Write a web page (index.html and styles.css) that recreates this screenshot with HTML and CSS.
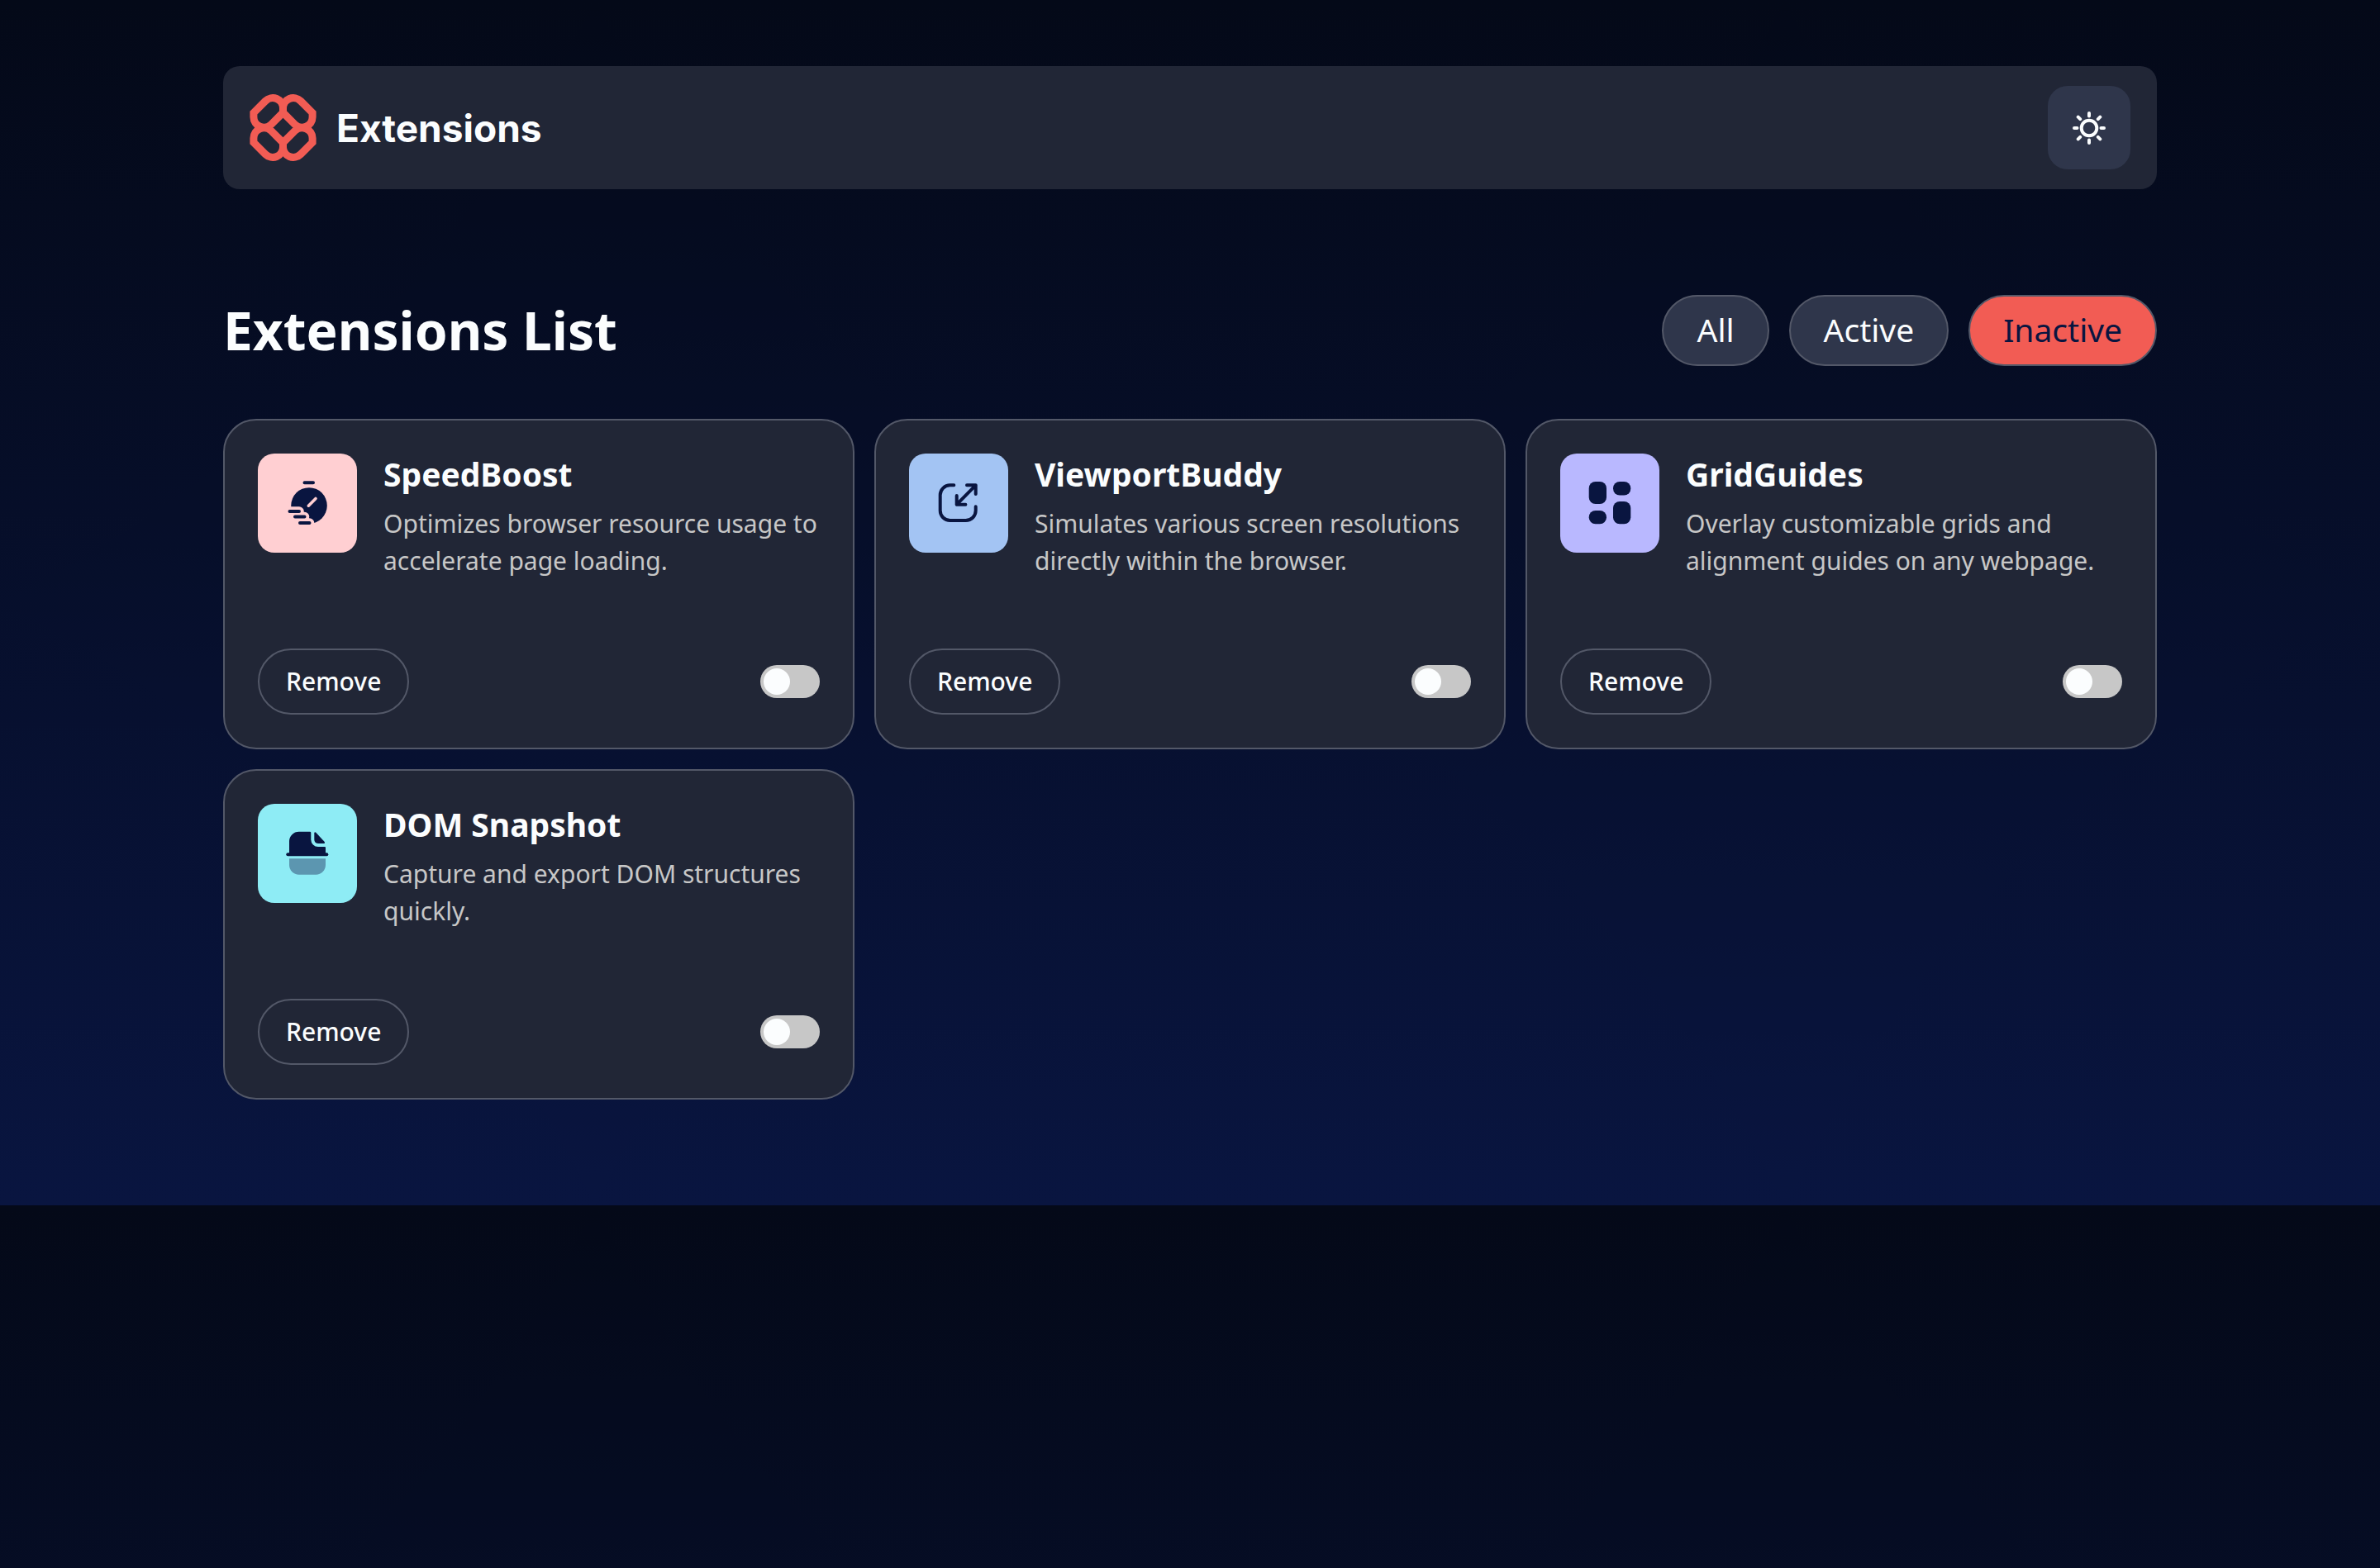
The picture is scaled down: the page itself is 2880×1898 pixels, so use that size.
FILE: index.html
```html
<!DOCTYPE html>
<html lang="en">
<head>
<meta charset="utf-8">
<meta name="viewport" content="width=device-width, initial-scale=1">
<title>Extensions</title>
<link rel="stylesheet" href="styles.css">
</head>
<body>
<div class="container">
  <header class="topbar">
    <a class="brand" href="#">
      <svg class="brand-mark" viewBox="0 0 81 81" aria-hidden="true">
        <defs>
          <path id="link" d="M40.5 17V22.3L26.2 36.6A12.5 12.5 0 0 1 4.9 27.8V22.5L19.2 8.2A12.5 12.5 0 0 1 40.5 17Z"/>
        </defs>
        <g fill="none" stroke="currentColor" stroke-width="9">
          <use href="#link"/>
          <use href="#link" transform="matrix(-1 0 0 1 81 0)"/>
          <use href="#link" transform="matrix(1 0 0 -1 0 81)"/>
          <use href="#link" transform="matrix(-1 0 0 -1 81 81)"/>
        </g>
      </svg>
      <span class="brand-name">Extensions</span>
    </a>
    <button class="theme-button" type="button" aria-label="Switch theme">
      <svg class="theme-icon" viewBox="-22 -22 44 44" aria-hidden="true">
        <g fill="none" stroke="currentColor" stroke-width="4" stroke-linecap="round">
          <circle r="9.3"/>
          <path d="M0-18v3.500M0 14.500V18M-18 0h3.500M14.500 0H18M-13.300-13.300l2.500 2.500M13.300-13.300l-2.500 2.500M-13.300 13.300l2.500-2.500M13.300 13.300l-2.500-2.500"/>
        </g>
      </svg>
    </button>
  </header>

  <main>
    <div class="list-head">
      <h1 class="list-title">Extensions List</h1>
      <div class="filters">
        <button class="filter" type="button">All</button>
        <button class="filter" type="button">Active</button>
        <button class="filter filter-current" type="button" aria-pressed="true">Inactive</button>
      </div>
    </div>

    <div class="cards">
      <article class="card">
        <div class="card-info">
          <svg class="tile tile-pink" viewBox="0 0 120 120" aria-hidden="true">
            <circle cx="62" cy="63" r="21.8" fill="#091540"/>
            <path d="M70 54.500l-8.700 8.700" stroke="#ffcfd2" stroke-width="3.600" stroke-linecap="round"/>
            <path d="M38.500 70H50M45 76.500h11.500M51 84h11.500" stroke="#ffcfd2" stroke-width="11.600" stroke-linecap="round"/>
            <path d="M56.500 35.200H67M38.500 70H50M45 76.500h11.500M51 84h11.500" stroke="#091540" stroke-width="4" stroke-linecap="round"/>
          </svg>
          <div class="card-text">
            <h2 class="card-title">SpeedBoost</h2>
            <p class="card-desc">Optimizes browser resource usage to accelerate page loading.</p>
          </div>
        </div>
        <div class="card-actions">
          <button class="remove" type="button">Remove</button>
          <input class="switch" type="checkbox" role="switch" aria-label="Enable SpeedBoost">
        </div>
      </article>

      <article class="card">
        <div class="card-info">
          <svg class="tile tile-blue" viewBox="0 0 120 120" aria-hidden="true">
            <path d="M54.300 38.300H49.700a12 12 0 0 0-12 12V69a12 12 0 0 0 12 12h19a12 12 0 0 0 12-12v-4.700M70 38.300h10.700V49M80.700 38.300l-23 23.400M57.700 51v10.700h10.700" fill="none" stroke="#091540" stroke-width="4" stroke-linecap="round" stroke-linejoin="round"/>
          </svg>
          <div class="card-text">
            <h2 class="card-title">ViewportBuddy</h2>
            <p class="card-desc">Simulates various screen resolutions directly within the browser.</p>
          </div>
        </div>
        <div class="card-actions">
          <button class="remove" type="button">Remove</button>
          <input class="switch" type="checkbox" role="switch" aria-label="Enable ViewportBuddy">
        </div>
      </article>

      <article class="card">
        <div class="card-info">
          <svg class="tile tile-violet" viewBox="0 0 120 120" aria-hidden="true">
            <g fill="#091540">
              <rect x="34.700" y="34" width="21.300" height="27" rx="8"/>
              <rect x="64" y="34" width="21.300" height="16.600" rx="8"/>
              <rect x="34.700" y="69" width="21.300" height="16.300" rx="8"/>
              <rect x="64" y="58" width="21.300" height="27.300" rx="8"/>
            </g>
          </svg>
          <div class="card-text">
            <h2 class="card-title">GridGuides</h2>
            <p class="card-desc">Overlay customizable grids and alignment guides on any webpage.</p>
          </div>
        </div>
        <div class="card-actions">
          <button class="remove" type="button">Remove</button>
          <input class="switch" type="checkbox" role="switch" aria-label="Enable GridGuides">
        </div>
      </article>

      <article class="card">
        <div class="card-info">
          <svg class="tile tile-cyan" viewBox="0 0 120 120" aria-hidden="true">
            <path d="M38 66.300h44V74a11.700 11.700 0 0 1-11.700 11.700H49.700A11.700 11.700 0 0 1 38 74Z" fill="#5c96b0"/>
            <g fill="#091540">
              <rect x="34.300" y="59.300" width="51" height="4" rx="2"/>
              <path d="M38 60V45.400a11.700 11.700 0 0 1 11.700-11.700H63q1.300 0 1.300 1.300v8.300A8.700 8.700 0 0 0 73 52h8q1 0 1 1v7Z"/>
              <path d="M68.300 35.500q.5-2 2-.7L80.500 45.800q1.300 2-.5 2.300H73.500q-5.200 0-5.200-5Z"/>
            </g>
          </svg>
          <div class="card-text">
            <h2 class="card-title">DOM Snapshot</h2>
            <p class="card-desc">Capture and export DOM structures quickly.</p>
          </div>
        </div>
        <div class="card-actions">
          <button class="remove" type="button">Remove</button>
          <input class="switch" type="checkbox" role="switch" aria-label="Enable DOM Snapshot">
        </div>
      </article>
    </div>
  </main>
</div>
</body>
</html>
```
FILE: styles.css
```css
* {
  box-sizing: border-box;
}

body {
  margin: 0;
  padding: 80px 32px 128px;
  background: linear-gradient(180deg, #040918 0%, #091540 100%);
  color: #fbfdfe;
  font-family: "Noto Sans", sans-serif;
}

h1,
h2,
p {
  margin: 0;
}

button {
  color: inherit;
  font-family: inherit;
  cursor: pointer;
}

.container {
  max-width: 2340px;
  margin: 0 auto;
}

.topbar {
  display: flex;
  align-items: center;
  justify-content: space-between;
  padding: 24px 32px;
  border-radius: 20px;
  background: #212636;
}

.brand {
  display: flex;
  align-items: center;
  gap: 24px;
  color: inherit;
  text-decoration: none;
}

.brand-mark {
  width: 81px;
  height: 81px;
  color: #f25c54;
}

.brand-name {
  font-family: Inter, sans-serif;
  font-size: 46px;
  font-weight: 700;
  line-height: 60px;
}

.theme-button {
  display: grid;
  place-items: center;
  width: 100px;
  height: 101px;
  padding: 0;
  border: 0;
  border-radius: 24px;
  background: #2f364b;
}

.theme-icon {
  width: 44px;
  height: 44px;
}

.list-head {
  display: flex;
  flex-wrap: wrap;
  align-items: center;
  justify-content: space-between;
  gap: 24px;
  margin: 128px 0 64px;
}

.list-title {
  font-size: 64px;
  font-weight: 700;
  line-height: 80px;
}

.filters {
  display: flex;
  gap: 24px;
}

.filter {
  padding: 13px 40px 15px;
  border: 2px solid #535868;
  border-radius: 43px;
  background: #2f364b;
  font-size: 39px;
  line-height: 54px;
}

.filter-current {
  background: #f25c54;
  color: #091540;
}

.cards {
  display: grid;
  grid-template-columns: repeat(auto-fill, minmax(640px, 1fr));
  gap: 24px;
}

.card {
  display: flex;
  flex-direction: column;
  justify-content: space-between;
  min-height: 400px;
  padding: 40px;
  border: 2px solid #535868;
  border-radius: 40px;
  background: #212636;
}

.card-info {
  display: flex;
  align-items: flex-start;
  gap: 32px;
}

.tile {
  flex: none;
  width: 120px;
  height: 120px;
  border-radius: 20px;
}

.tile-pink {
  background: #ffcfd2;
}

.tile-blue {
  background: #a3c4f3;
}

.tile-violet {
  background: #b9b8ff;
}

.tile-cyan {
  background: #8eecf5;
}

.card-title {
  margin-bottom: 12px;
  font-size: 39px;
  font-weight: 700;
  line-height: 50px;
}

.card-desc {
  color: #c7c7c7;
  font-size: 30px;
  line-height: 45px;
}

.card-actions {
  display: flex;
  align-items: center;
  justify-content: space-between;
}

.remove {
  padding: 16px 32px;
  border: 2px solid #535868;
  border-radius: 40px;
  background: transparent;
  font-size: 30px;
  font-weight: 500;
  line-height: 44px;
}

.switch {
  appearance: none;
  display: flex;
  align-items: center;
  width: 72px;
  height: 40px;
  margin: 0;
  padding: 4px;
  border-radius: 20px;
  background: #c7c7c7;
  cursor: pointer;
}

.switch::before {
  content: "";
  width: 32px;
  height: 32px;
  border-radius: 50%;
  background: #fbfdfe;
}

.switch:checked {
  justify-content: flex-end;
  background: #f25c54;
}
```
